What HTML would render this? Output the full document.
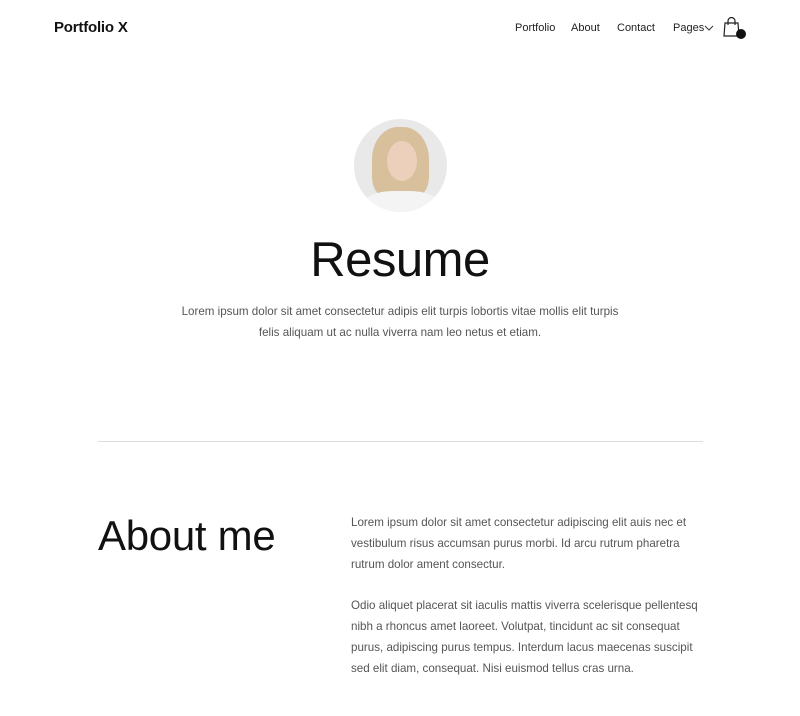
<!DOCTYPE html>
<html><head><meta charset="utf-8"><style>
body{margin:0;background:#fff;font-family:"Liberation Sans",sans-serif;color:#111;width:800px;height:716px;overflow:hidden;position:relative}
.a{position:absolute}
.nav{font-size:11px;color:#222;top:22px}
p{margin:0}
.g{color:#555;font-size:11.6px;line-height:21px}
</style></head><body>
<div class="a" style="left:54px;top:19px;font-size:15px;font-weight:bold;letter-spacing:-0.2px">Portfolio X</div>
<div class="a nav" style="left:515px">Portfolio</div>
<div class="a nav" style="left:571px">About</div>
<div class="a nav" style="left:617px">Contact</div>
<div class="a nav" style="left:673px">Pages</div>
<svg class="a" style="left:704px;top:24px" width="10" height="8"><path d="M1 2l4 4 4-4" stroke="#333" fill="none"/></svg>
<svg class="a" style="left:722px;top:17px" width="28" height="24"><path d="M3 6h13l1 13H2z" stroke="#222" fill="none" stroke-width="1.2"/><path d="M6 8V4a3.5 3.5 0 017 0v4" stroke="#222" fill="none" stroke-width="1.2"/><circle cx="19" cy="17" r="5" fill="#111"/></svg>
<div class="a" style="left:354px;top:119px;width:93px;height:93px;border-radius:50%;background:#e9e9e9;overflow:hidden">
<div class="a" style="left:18px;top:8px;width:57px;height:72px;border-radius:45% 45% 30% 30%;background:#d8c09c"></div>
<div class="a" style="left:33px;top:22px;width:30px;height:40px;border-radius:50%;background:#ecd0bc"></div>
<div class="a" style="left:10px;top:72px;width:75px;height:30px;background:#f4f4f4;border-radius:40% 40% 0 0"></div>
</div>
<div class="a" style="left:0;width:800px;top:232px;text-align:center;font-size:49px;letter-spacing:-0.5px">Resume</div>
<div class="a g" style="left:130px;width:540px;top:301px;text-align:center">Lorem ipsum dolor sit amet consectetur adipis elit turpis lobortis vitae mollis elit turpis<br>felis aliquam ut ac nulla viverra nam leo netus et etiam.</div>
<div class="a" style="left:98px;width:605px;top:441px;height:1px;background:#ddd"></div>
<div class="a" style="left:98px;top:512px;font-size:42px;letter-spacing:-0.3px">About me</div>
<div class="a g" style="left:351px;top:512px;width:352px">Lorem ipsum dolor sit amet consectetur adipiscing elit auis nec et vestibulum risus accumsan purus morbi. Id arcu rutrum pharetra rutrum dolor ament consectur.</div>
<div class="a g" style="left:351px;top:595px;width:352px">Odio aliquet placerat sit iaculis mattis viverra scelerisque pellentesq nibh a rhoncus amet laoreet. Volutpat, tincidunt ac sit consequat purus, adipiscing purus tempus. Interdum lacus maecenas suscipit sed elit diam, consequat. Nisi euismod tellus cras urna.</div>
</body></html>
